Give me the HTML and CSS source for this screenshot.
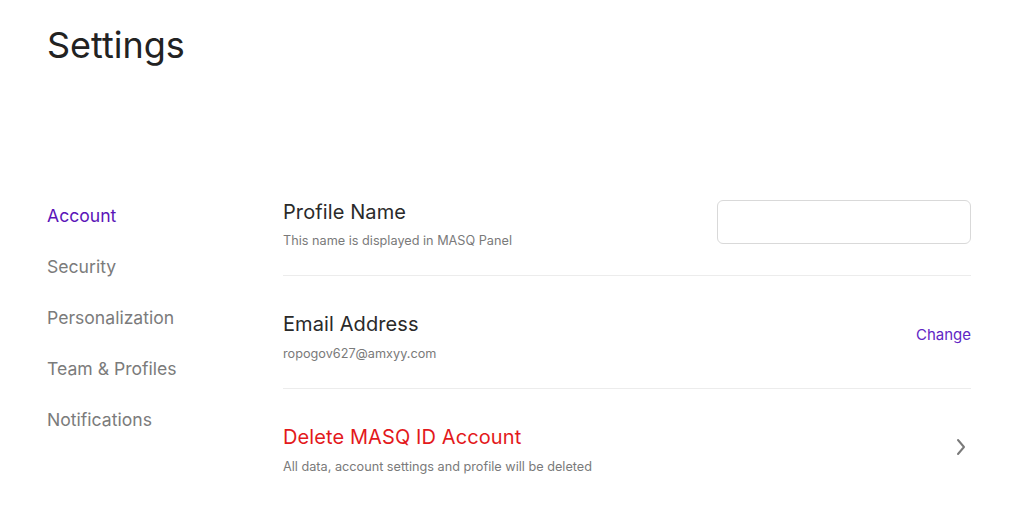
FILE: index.html
```html
<!DOCTYPE html>
<html lang="en">
<head>
<meta charset="utf-8">
<title>Settings</title>
<link rel="stylesheet" href="styles.css">
</head>
<body>
<div class="page">
  <h1 class="page-title">Settings</h1>
  <div class="layout">
    <nav class="sidebar">
      <a class="nav-item active">Account</a>
      <a class="nav-item">Security</a>
      <a class="nav-item">Personalization</a>
      <a class="nav-item">Team &amp; Profiles</a>
      <a class="nav-item">Notifications</a>
    </nav>
    <main class="content">
      <section class="row row-first">
        <div class="row-text">
          <div class="row-title">Profile Name</div>
          <div class="row-sub">This name is displayed in MASQ Panel</div>
        </div>
        <input class="text-input" type="text">
      </section>
      <section class="row row-center">
        <div class="row-text">
          <div class="row-title">Email Address</div>
          <div class="row-sub">ropogov627@amxyy.com</div>
        </div>
        <a class="link">Change</a>
      </section>
      <section class="row row-center row-last">
        <div class="row-text">
          <div class="row-title danger">Delete MASQ ID Account</div>
          <div class="row-sub">All data, account settings and profile will be deleted</div>
        </div>
        <svg class="chevron" width="10" height="18" viewBox="0 0 10 18" aria-hidden="true">
          <path d="M2 2 L8 9 L2 16" fill="none" stroke="#7a7a7a" stroke-width="2" stroke-linecap="round" stroke-linejoin="round"/>
        </svg>
      </section>
    </main>
  </div>
</div>
</body>
</html>
```

FILE: styles.css
```css
* { box-sizing: border-box; }
html, body { margin: 0; padding: 0; background: #fff; }
body {
  font-family: Inter, "Noto Sans", "Liberation Sans", sans-serif;
  color: #222;
}
.page {
  padding: 23px 53px 0 47px;
}
.page-title {
  margin: 0;
  font-size: 36px;
  line-height: 44px;
  font-weight: 400;
  color: #222;
}
.layout {
  display: flex;
  margin-top: 133px;
}
.sidebar {
  width: 236px;
  flex: none;
  display: flex;
  flex-direction: column;
  gap: 27px;
  padding-top: 4px;
}
.nav-item {
  font-size: 17.6px;
  line-height: 24px;
  color: #7b7b7b;
  cursor: pointer;
}
.nav-item.active { color: #5b14b8; }
.content {
  flex: 1;
  display: flex;
  flex-direction: column;
}
.row {
  display: flex;
  justify-content: space-between;
  align-items: center;
  padding: 36px 0 25px;
  border-bottom: 1px solid #ececec;
}
.row-first {
  padding-top: 0;
  padding-bottom: 25px;
  align-items: flex-start;
}
.row-last { border-bottom: none; }
.row-title {
  font-size: 20px;
  line-height: 24px;
  color: #2a2a2a;
  letter-spacing: 0.1px;
}
.row-title.danger { color: #e3191c; }
.row-sub {
  margin-top: 9px;
  font-size: 12.7px;
  line-height: 18px;
  color: #7a7a7a;
}
.row-first .row-sub { margin-top: 8px; }
.text-input {
  width: 254px;
  height: 44px;
  border: 1.5px solid #d9d9d9;
  border-radius: 6px;
  background: #fff;
  outline: none;
  font: inherit;
}
.link {
  font-size: 15px;
  color: #6126c4;
  cursor: pointer;
  margin-top: -7px;
}
.chevron { margin-right: 5px; margin-top: -8px; }
```
